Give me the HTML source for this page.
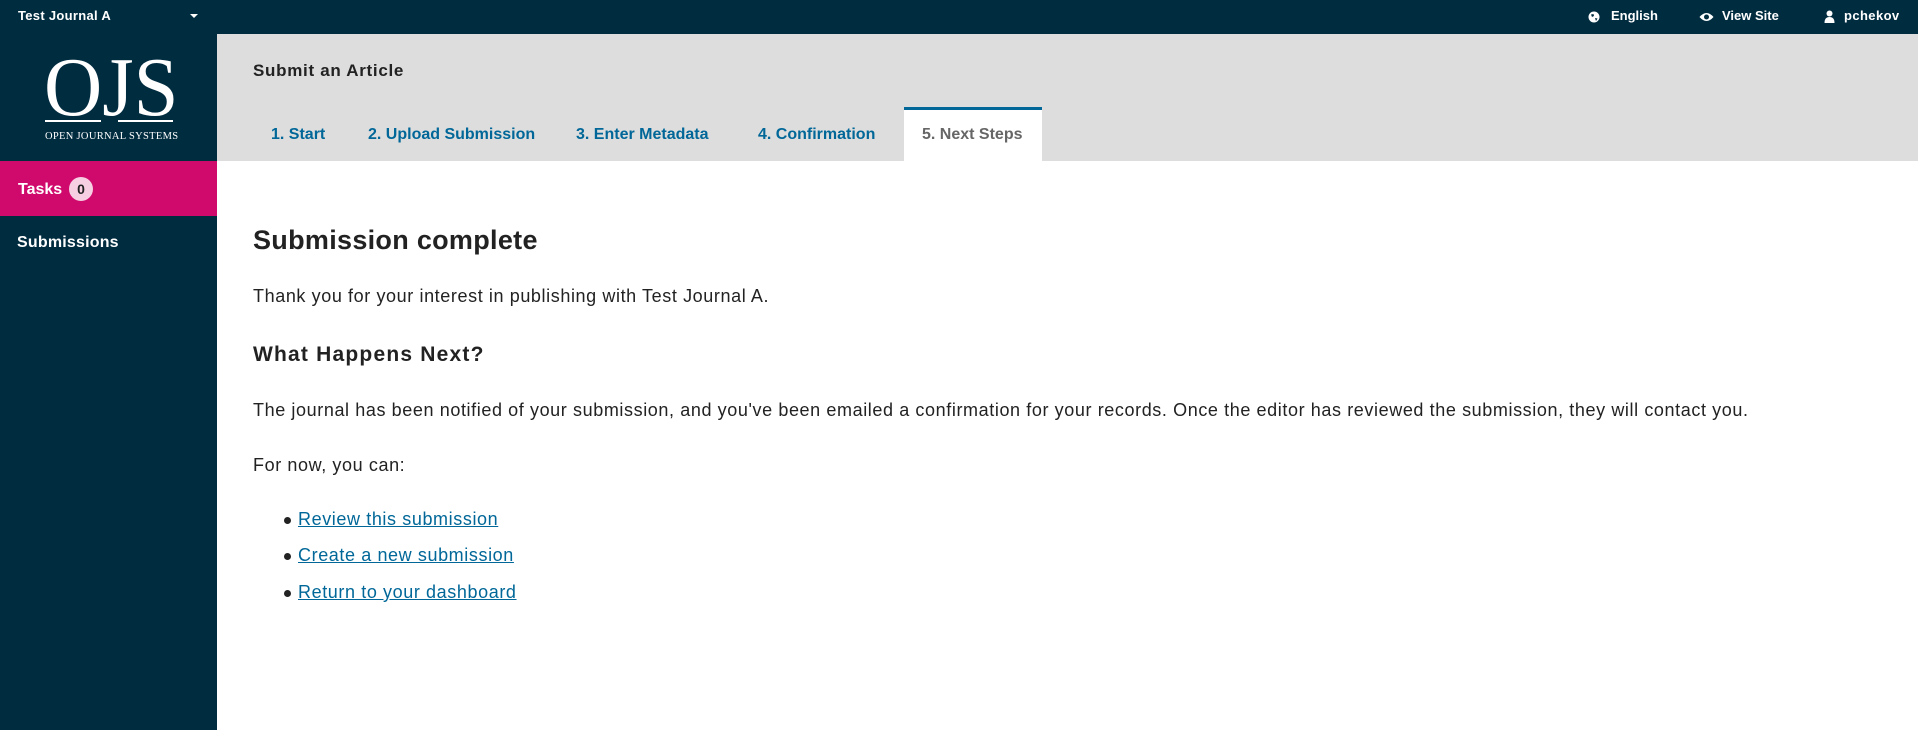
<!DOCTYPE html>
<html><head><meta charset="utf-8"><style>
*{margin:0;padding:0;box-sizing:border-box}
body{width:1918px;height:730px;overflow:hidden;background:#fff;font-family:"Liberation Sans",sans-serif;color:#222;position:relative}
.a{position:absolute;white-space:nowrap}
.top{position:absolute;left:0;top:0;width:1918px;height:34px;background:#002c40}
.side{position:absolute;left:0;top:34px;width:217px;height:696px;background:#002c40}
.hdr{position:absolute;left:217px;top:34px;width:1701px;height:127px;background:#ddd}
.wt{color:#fff;font-weight:bold;font-size:13px}
.tab{color:#006798;font-weight:bold;font-size:16px;top:126px}
p.a{font-size:18px;letter-spacing:0.6px}
a{color:#006798;text-decoration:underline}
</style></head><body>
<div class="top"></div>
<div class="side"></div>
<div class="hdr"></div>
<div class="a wt" style="left:18px;top:8px;letter-spacing:0.3px">Test Journal A</div>
<div class="a" style="left:190px;top:14px;width:0;height:0;border-left:4px solid transparent;border-right:4px solid transparent;border-top:4px solid #fff"></div>

<svg class="a" style="left:1588px;top:11px" width="12" height="12" viewBox="0 0 12 12"><circle cx="6" cy="6" r="5.5" fill="#fff"/><path d="M3 3.5 L5.5 3 L6 5 L4 6 Z M7 7 L9.5 7.5 L8 10 Z" fill="#002c40"/></svg>
<div class="a wt" style="left:1611px;top:8px">English</div>
<svg class="a" style="left:1699px;top:12px" width="15" height="10" viewBox="0 0 15 10"><path d="M0.5 5 Q7.5 -3 14.5 5 Q7.5 13 0.5 5Z" fill="#fff"/><circle cx="7.5" cy="5" r="2.5" fill="#002c40"/></svg>
<div class="a wt" style="left:1722px;top:8px">View Site</div>
<svg class="a" style="left:1824px;top:10px" width="11" height="13" viewBox="0 0 11 13"><circle cx="5.5" cy="3.5" r="3" fill="#fff"/><path d="M0.5 13 Q0.5 7 5.5 7 Q10.5 7 10.5 13Z" fill="#fff"/></svg>
<div class="a wt" style="left:1844px;top:8px;letter-spacing:0.4px">pchekov</div>

<div class="a" style="left:44px;top:46px;font-family:'Liberation Serif',serif;color:#fff;font-size:84px;line-height:84px;letter-spacing:0px;transform:scaleX(0.96);transform-origin:left top">OJS</div>
<div class="a" style="left:45px;top:120px;width:56px;height:2px;background:#fff"></div>
<div class="a" style="left:118px;top:120px;width:55px;height:2px;background:#fff"></div>
<div class="a" style="left:45px;top:131px;font-family:'Liberation Serif',serif;color:#fff;font-size:10.5px;letter-spacing:0.3px">OPEN JOURNAL SYSTEMS</div>

<div class="a" style="left:0;top:161px;width:217px;height:55px;background:#d00a6c"></div>
<div class="a wt" style="left:18px;top:181px;font-size:16px">Tasks</div>
<div class="a" style="left:69px;top:177px;width:24px;height:24px;border-radius:12px;background:#f6cfe2;color:#222;font-weight:bold;font-size:14px;text-align:center;line-height:24px">0</div>
<div class="a wt" style="left:17px;top:234px;font-size:16px;letter-spacing:0.2px">Submissions</div>

<div class="a" style="left:253px;top:61px;font-weight:bold;font-size:17px;letter-spacing:0.7px">Submit an Article</div>
<div class="a" style="left:904px;top:107px;width:138px;height:54px;background:#fff;border-top:3px solid #006798"></div>
<div class="a tab" style="left:271px">1. Start</div>
<div class="a tab" style="left:368px">2. Upload Submission</div>
<div class="a tab" style="left:576px">3. Enter Metadata</div>
<div class="a tab" style="left:758px">4. Confirmation</div>
<div class="a tab" style="left:922px;color:#666">5. Next Steps</div>

<div class="a" style="left:253px;top:225px;font-weight:bold;font-size:27px;letter-spacing:0.3px">Submission complete</div>
<p class="a" style="left:253px;top:286px">Thank you for your interest in publishing with Test Journal A.</p>
<div class="a" style="left:253px;top:343px;font-weight:bold;font-size:21px;letter-spacing:1.2px">What Happens Next?</div>
<p class="a" style="left:253px;top:400px">The journal has been notified of your submission, and you've been emailed a confirmation for your records. Once the editor has reviewed the submission, they will contact you.</p>
<p class="a" style="left:253px;top:455px">For now, you can:</p>
<div class="a" style="left:284px;top:517px;width:7px;height:7px;border-radius:4px;background:#222"></div>
<div class="a" style="left:284px;top:553px;width:7px;height:7px;border-radius:4px;background:#222"></div>
<div class="a" style="left:284px;top:590px;width:7px;height:7px;border-radius:4px;background:#222"></div>
<p class="a" style="left:298px;top:509px"><a>Review this submission</a></p>
<p class="a" style="left:298px;top:545px"><a>Create a new submission</a></p>
<p class="a" style="left:298px;top:582px"><a>Return to your dashboard</a></p>
</body></html>
